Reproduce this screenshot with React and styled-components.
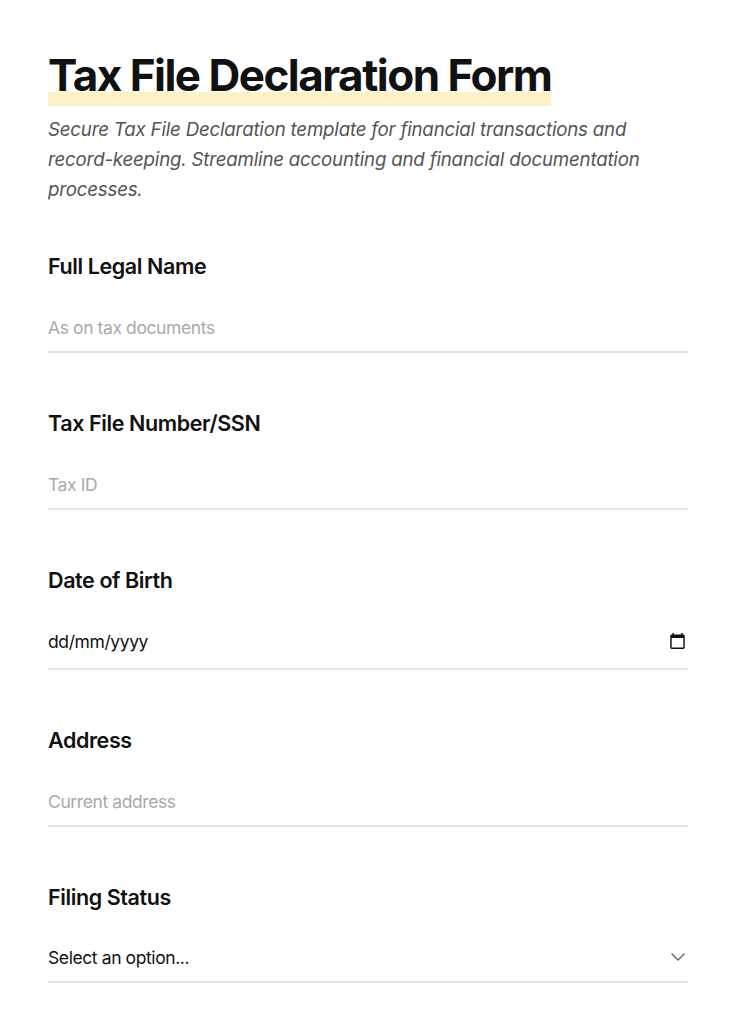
import React, { useState } from 'react';
import styled, { createGlobalStyle } from 'styled-components';
import { ChevronDown } from 'lucide-react';

const GlobalStyle = createGlobalStyle`
  body {
    margin: 0;
    background: #ffffff;
    font-family: Inter, 'Noto Sans', sans-serif;
    color: #111111;
  }
`;

const Page = styled.main`
  padding: 50px 48px 40px;
  max-width: 640px;
`;

const Title = styled.h1`
  display: inline-block;
  margin: 0;
  font-size: 44px;
  line-height: 50px;
  font-weight: 700;
  letter-spacing: -1.5px;
  padding-bottom: 6px;
  background: linear-gradient(to bottom, transparent 0 42px, #fdf1c8 42px);
`;

const Intro = styled.p`
  margin: 9px 0 47px;
  font-size: 18.7px;
  line-height: 30px;
  font-style: italic;
  color: #555555;
  letter-spacing: -0.2px;
`;

const Field = styled.div`
  display: flex;
  flex-direction: column;
  margin-bottom: 56px;
`;

const Label = styled.label`
  font-size: 21.5px;
  line-height: 28px;
  font-weight: 600;
  letter-spacing: -0.4px;
  margin-bottom: 26px;
`;

const InputRow = styled.div`
  position: relative;
  display: flex;
`;

const TextInput = styled.input`
  width: 100%;
  box-sizing: border-box;
  height: ${(p) => p.$height || 47}px;
  padding: 0 0 ${(p) => p.$padBottom || 3}px;
  border: none;
  border-bottom: 2px solid #e6e6e6;
  font-family: inherit;
  font-size: 17.5px;
  color: #111111;
  background: transparent;
  outline: none;
  letter-spacing: -0.4px;

  &::placeholder {
    color: ${(p) => (p.$darkHint ? '#111111' : '#a9a9a9')};
  }
`;

const Select = styled.select`
  width: 100%;
  box-sizing: border-box;
  height: 46px;
  padding: 0 0 4px;
  border: none;
  border-bottom: 2px solid #e6e6e6;
  font-family: inherit;
  font-size: 17.5px;
  color: #111111;
  background: transparent;
  appearance: none;
  outline: none;
  letter-spacing: -0.4px;
`;

const Chevron = styled(ChevronDown)`
  position: absolute;
  right: -2px;
  top: 8px;
  color: #6b6b6b;
  pointer-events: none;
`;

const CalendarButton = styled.button`
  position: absolute;
  right: 2px;
  top: 12px;
  width: 18px;
  height: 18px;
  padding: 0;
  border: none;
  background: transparent;
  display: flex;
  align-items: center;
  justify-content: center;
  cursor: pointer;
`;

const CalendarIcon = () => (
  <svg width="15" height="16" viewBox="2 1 20 22" fill="#111111">
    <path d="M20 3h-1V1h-2v2H7V1H5v2H4c-1.1 0-2 .9-2 2v16c0 1.1.9 2 2 2h16c1.1 0 2-.9 2-2V5c0-1.1-.9-2-2-2zm0 18H4V8h16v13z" />
  </svg>
);

const fields = [
  { id: 'name', label: 'Full Legal Name', placeholder: 'As on tax documents' },
  { id: 'tfn', label: 'Tax File Number/SSN', placeholder: 'Tax ID' },
];

export default function App() {
  const [status, setStatus] = useState('');

  return (
    <>
      <GlobalStyle />
      <Page>
        <Title>Tax File Declaration Form</Title>
        <Intro>
          Secure Tax File Declaration template for financial transactions and
          record-keeping. Streamline accounting and financial documentation
          processes.
        </Intro>

        {fields.map((f) => (
          <Field key={f.id}>
            <Label htmlFor={f.id}>{f.label}</Label>
            <TextInput id={f.id} type="text" placeholder={f.placeholder} />
          </Field>
        ))}

        <Field>
          <Label htmlFor="dob">Date of Birth</Label>
          <InputRow>
            <TextInput
              id="dob"
              type="text"
              inputMode="numeric"
              placeholder="dd/mm/yyyy"
              $height={50}
              $padBottom={5}
              $darkHint
            />
            <CalendarButton type="button" aria-label="Pick a date">
              <CalendarIcon />
            </CalendarButton>
          </InputRow>
        </Field>

        <Field>
          <Label htmlFor="address">Address</Label>
          <TextInput id="address" type="text" placeholder="Current address" />
        </Field>

        <Field>
          <Label htmlFor="status">Filing Status</Label>
          <InputRow>
            <Select
              id="status"
              value={status}
              onChange={(e) => setStatus(e.target.value)}
            >
              <option value="">Select an option...</option>
              <option value="single">Single</option>
              <option value="married-joint">Married filing jointly</option>
              <option value="married-separate">Married filing separately</option>
              <option value="head">Head of household</option>
            </Select>
            <Chevron size={24} strokeWidth={1.5} />
          </InputRow>
        </Field>
      </Page>
    </>
  );
}
